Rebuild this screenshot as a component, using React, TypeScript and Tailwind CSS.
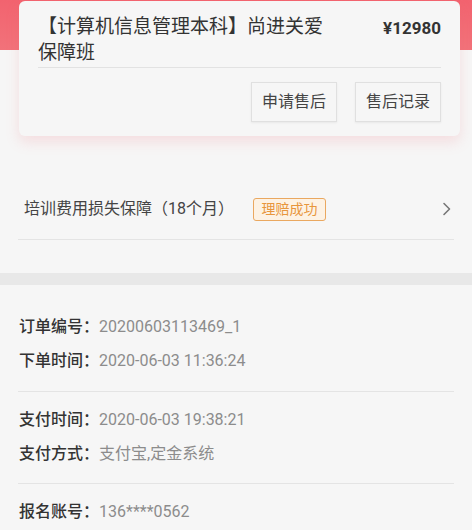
import React from "react";

const font = { fontFamily: 'Roboto, "Noto Sans CJK SC", "Noto Sans", sans-serif' };

function InfoRow({ label, value }: { label: string; value: string }) {
  return (
    <div className="flex h-[34px] items-center text-[16px]">
      <span className="font-medium text-[#333]">{label}</span>
      <span className="text-[#8c8c8c]">{value}</span>
    </div>
  );
}

export default function App() {
  return (
    <div
      style={font}
      className="w-[472px] h-[530px] overflow-hidden bg-[linear-gradient(to_bottom,#f2636f_0px,#f2727a_50px,#f6f6f6_50px)]"
    >
      <div className="pl-[19px] pr-[12px] pt-[1px]">
        <div className="rounded-[6px] bg-[#f6f6f6] pl-[19px] pr-[19px] pt-[13px] pb-[14px] shadow-[0_6px_14px_rgba(240,110,120,0.18)]">
          <div className="flex items-start justify-between">
            <div className="w-[292px] text-[19px] leading-[26px] text-[#333]">
              【计算机信息管理本科】尚进关爱保障班
            </div>
            <div className="pt-[1px] text-[17px] font-bold leading-[26px] text-[#333]">¥12980</div>
          </div>
          <div className="mt-[1px] h-px bg-[#e2e2e2]" />
          <div className="mt-[14px] flex justify-end gap-[18px]">
            <div className="flex h-[40px] w-[86px] items-center justify-center border border-[#e0e0e0] text-[16px] text-[#444] shadow-[0_1px_2px_rgba(0,0,0,0.06)]">
              申请售后
            </div>
            <div className="flex h-[40px] w-[86px] items-center justify-center border border-[#e0e0e0] text-[16px] text-[#444] shadow-[0_1px_2px_rgba(0,0,0,0.06)]">
              售后记录
            </div>
          </div>
        </div>
      </div>

      <div className="mt-[43px]">
        <div className="flex h-[60px] items-center pl-[24px] pr-[20px]">
          <span className="text-[16px] text-[#444]">培训费用损失保障（18个月）</span>
          <span className="ml-[19px] flex h-[23px] w-[73px] items-center justify-center rounded-[3px] border-[1.5px] border-[#eaa860] bg-[#fdf2e4] text-[14px] text-[#e8963c]">
            理赔成功
          </span>
          <svg className="ml-auto" width="10" height="14" viewBox="0 0 10 14" fill="none">
            <path d="M2 1.5 L7.5 7 L2 12.5" stroke="#777" strokeWidth="1.6" strokeLinecap="round" strokeLinejoin="round" />
          </svg>
        </div>
        <div className="mx-[18px] h-px bg-[#e4e4e4]" />
      </div>

      <div className="mt-[33px] h-[12px] bg-[#e8e8e8]" />

      <div className="px-[19px] pt-[25px]">
        <InfoRow label="订单编号：" value="20200603113469_1" />
        <InfoRow label="下单时间：" value="2020-06-03 11:36:24" />
      </div>
      <div className="mx-[18px] mt-[13px] h-px bg-[#e4e4e4]" />
      <div className="px-[19px] pt-[11px]">
        <InfoRow label="支付时间：" value="2020-06-03 19:38:21" />
        <InfoRow label="支付方式：" value="支付宝,定金系统" />
      </div>
      <div className="mx-[18px] mt-[12px] h-px bg-[#e4e4e4]" />
      <div className="px-[19px] pt-[11px]">
        <InfoRow label="报名账号：" value="136****0562" />
      </div>
    </div>
  );
}
